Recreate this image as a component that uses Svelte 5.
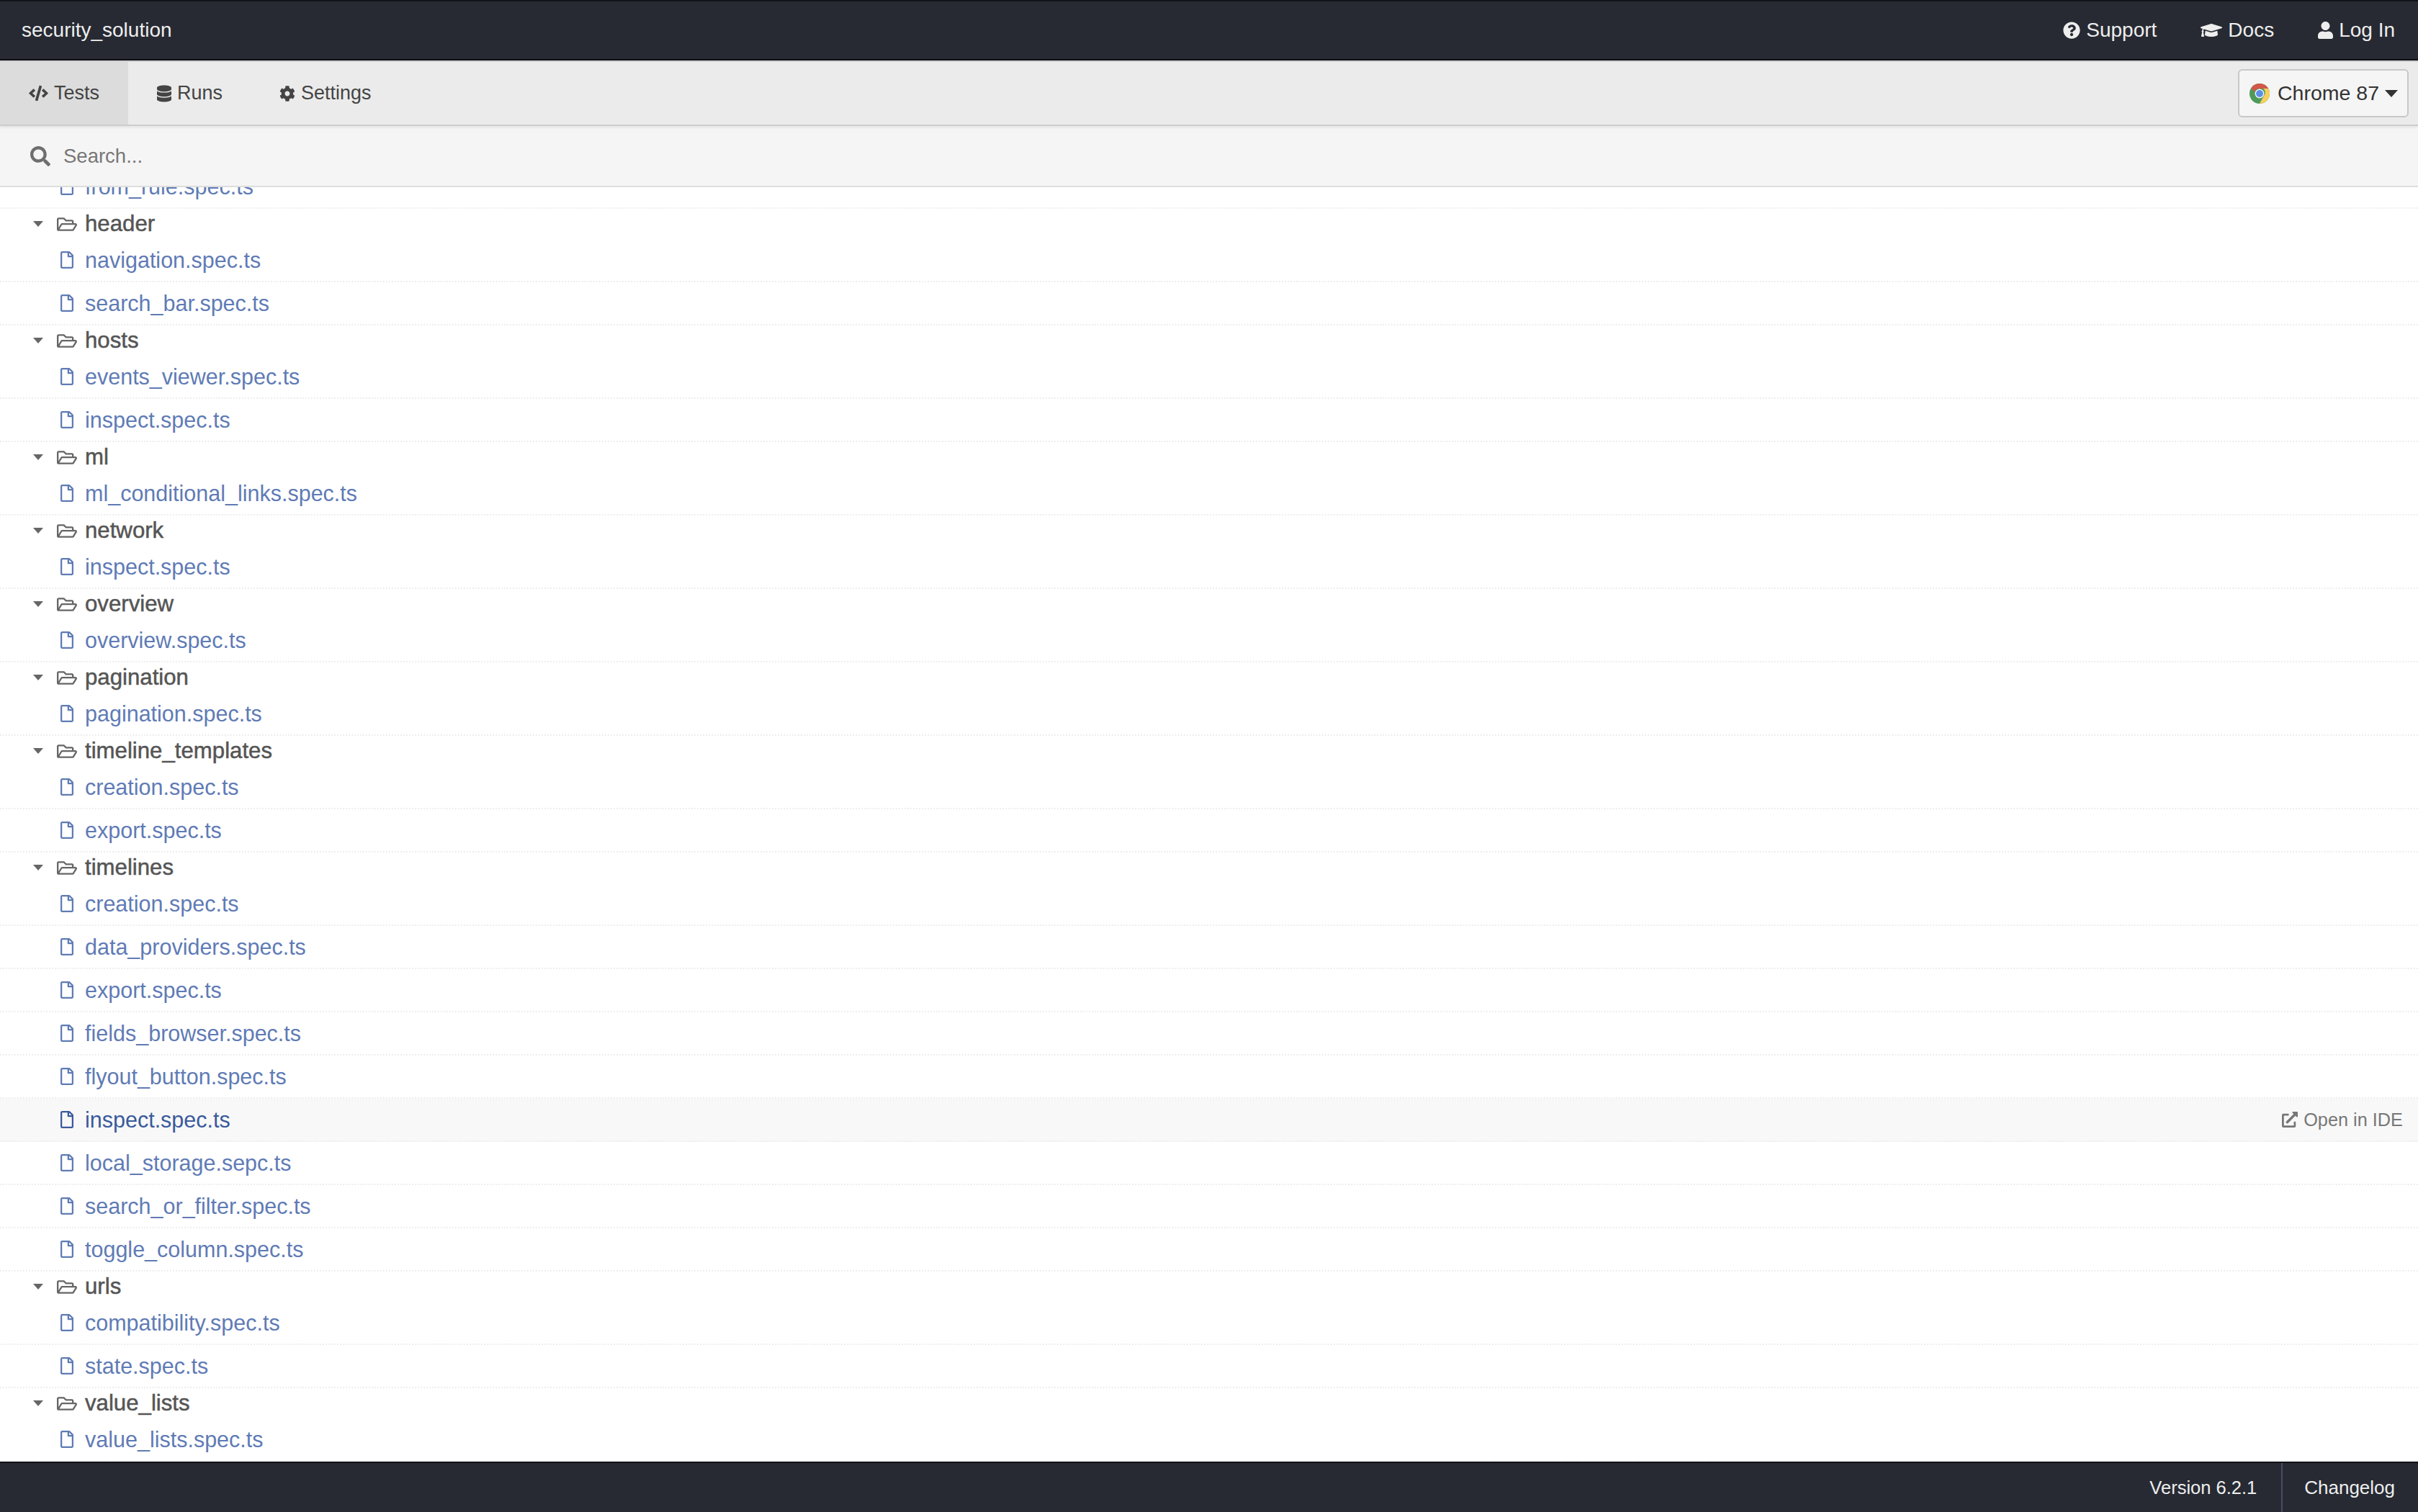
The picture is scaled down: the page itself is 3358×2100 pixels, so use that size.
<script>
	const folders = [
		{ name: 'header', specs: ['navigation.spec.ts', 'search_bar.spec.ts'] },
		{ name: 'hosts', specs: ['events_viewer.spec.ts', 'inspect.spec.ts'] },
		{ name: 'ml', specs: ['ml_conditional_links.spec.ts'] },
		{ name: 'network', specs: ['inspect.spec.ts'] },
		{ name: 'overview', specs: ['overview.spec.ts'] },
		{ name: 'pagination', specs: ['pagination.spec.ts'] },
		{ name: 'timeline_templates', specs: ['creation.spec.ts', 'export.spec.ts'] },
		{
			name: 'timelines',
			specs: [
				'creation.spec.ts',
				'data_providers.spec.ts',
				'export.spec.ts',
				'fields_browser.spec.ts',
				'flyout_button.spec.ts',
				'inspect.spec.ts',
				'local_storage.sepc.ts',
				'search_or_filter.spec.ts',
				'toggle_column.spec.ts'
			]
		},
		{ name: 'urls', specs: ['compatibility.spec.ts', 'state.spec.ts'] },
		{ name: 'value_lists', specs: ['value_lists.spec.ts'] }
	];
	const fileIcon =
		'M369.9 97.9L286 14C277 5 264.8-.1 252.1-.1H48C21.5 0 0 21.5 0 48v416c0 26.5 21.5 48 48 48h288c26.5 0 48-21.5 48-48V131.9c0-12.7-5.1-25-14.1-34zM332.1 128H256V51.9l76.1 76.1zM48 464V48h160v104c0 13.3 10.7 24 24 24h104v288H48z';
	const folderIcon =
		'M527.9 224H480v-48c0-26.5-21.5-48-48-48H272l-64-64H48C21.5 64 0 85.5 0 112v288c0 26.5 21.5 48 48 48h400c16.5 0 31.9-8.5 40.7-22.6l79.9-128c20-31.9-3-73.4-40.7-73.4zM48 118c0-3.3 2.7-6 6-6h134.1l64 64H426c3.3 0 6 2.7 6 6v42H152c-16.8 0-32.4 8.8-41.1 23.2L48 351.4zm400 282H72l77.2-128H528z';
</script>

{#snippet specRow(spec, hovered)}
	<div class="row spec" class:hovered>
		<svg class="file-icon" viewBox="0 0 384 512"><path d={fileIcon} /></svg>
		<span class="spec-name">{spec}</span>
		{#if hovered}
			<span class="open-ide">
				<svg viewBox="0 0 512 512"><path d="M432,320H400a16,16,0,0,0-16,16V448H64V128H208a16,16,0,0,0,16-16V80a16,16,0,0,0-16-16H48A48,48,0,0,0,0,112V464a48,48,0,0,0,48,48H400a48,48,0,0,0,48-48V336A16,16,0,0,0,432,320ZM488,0h-128c-21.37,0-32.05,25.91-17,41l35.73,35.73L135,320.37a24,24,0,0,0,0,34L157.67,377a24,24,0,0,0,34,0L435.28,133.32,471,169c15,15,41,4.5,41-17V24A24,24,0,0,0,488,0Z" /></svg>
				Open in IDE
			</span>
		{/if}
	</div>
{/snippet}

<div class="app">
	<header class="topbar">
		<span class="project">security_solution</span>
		<nav class="top-links">
			<a>
				<svg viewBox="0 0 512 512"><path d="M504 256c0 136.997-111.043 248-248 248S8 392.997 8 256C8 119.083 119.043 8 256 8s248 111.083 248 248zM262.655 90c-54.497 0-89.255 22.957-116.549 63.758-3.536 5.286-2.353 12.415 2.715 16.258l34.699 26.31c5.205 3.947 12.621 3.008 16.665-2.122 17.864-22.658 30.113-35.797 57.303-35.797 20.429 0 45.698 13.148 45.698 32.958 0 14.976-12.363 22.667-32.534 33.976C247.128 238.528 216 254.941 216 296v4c0 6.627 5.373 12 12 12h56c6.627 0 12-5.373 12-12v-1.333c0-28.462 83.186-29.647 83.186-106.667 0-58.002-60.165-102-116.531-102zM256 338c-25.365 0-46 20.635-46 46 0 25.364 20.635 46 46 46s46-20.636 46-46c0-25.365-20.635-46-46-46z" /></svg>
				Support
			</a>
			<a>
				<svg class="cap" viewBox="0 0 640 512"><path d="M622.34 153.2L343.4 67.5c-15.2-4.67-31.6-4.67-46.79 0L17.66 153.2c-23.54 7.23-23.54 38.36 0 45.59l48.63 14.94c-10.67 13.19-17.23 29.28-17.88 46.9C38.78 266.15 32 276.11 32 288c0 10.78 5.68 19.85 13.86 25.65L20.33 428.53C18.11 438.52 25.71 448 35.94 448h56.11c10.24 0 17.84-9.48 15.62-19.47L82.14 313.65C90.32 307.85 96 298.78 96 288c0-11.57-6.47-21.25-15.66-26.87.76-15.02 8.44-28.3 20.69-36.72L296.6 284.5c9.06 2.78 26.44 6.25 46.79 0l278.95-85.7c23.55-7.24 23.55-38.36 0-45.6zM352.79 315.09c-28.53 8.76-52.84 3.92-65.59 0l-145.02-44.55L128 384c0 35.35 85.96 64 192 64s192-28.65 192-64l-14.18-113.47-145.03 44.56z" /></svg>
				Docs
			</a>
			<a>
				<svg class="user" viewBox="0 0 448 512"><path d="M224 256c70.7 0 128-57.3 128-128S294.7 0 224 0 96 57.3 96 128s57.3 128 128 128zm89.6 32h-16.7c-22.2 10.2-46.9 16-72.9 16s-50.6-5.8-72.9-16h-16.7C60.2 288 0 348.2 0 422.4V464c0 26.5 21.5 48 48 48h352c26.5 0 48-21.5 48-48v-41.6c0-74.2-60.2-134.4-134.4-134.4z" /></svg>
				Log In
			</a>
		</nav>
	</header>

	<div class="toolbar">
		<div class="tabs">
			<a class="tab active">
				<svg class="code" viewBox="0 0 640 512"><path d="M278.9 511.5l-61-17.7c-6.4-1.8-10-8.5-8.2-14.9L346.2 8.7c1.8-6.4 8.5-10 14.9-8.2l61 17.7c6.4 1.8 10 8.5 8.2 14.9L293.8 503.3c-1.9 6.4-8.5 10.1-14.9 8.2zm-114-112.2l43.5-46.4c4.6-4.9 4.3-12.7-.8-17.2L117 256l90.6-79.7c5.1-4.5 5.5-12.3.8-17.2l-43.5-46.4c-4.5-4.8-12.1-5.1-17-.5L3.8 247.2c-5.1 4.7-5.1 12.8 0 17.5l144.1 135.1c4.9 4.6 12.5 4.4 17-.5zm327.2.6l144.1-135.1c5.1-4.7 5.1-12.8 0-17.5L492.1 112.1c-4.8-4.5-12.4-4.3-17 .5L431.6 159c-4.6 4.9-4.3 12.7.8 17.2L523 256l-90.6 79.7c-5.1 4.5-5.5 12.3-.8 17.2l43.5 46.4c4.5 4.9 12.1 5.1 17 .6z" /></svg>
				Tests
			</a>
			<a class="tab runs">
				<svg class="db" viewBox="0 0 448 512"><path d="M448 73.143v45.714C448 159.143 347.667 192 224 192S0 159.143 0 118.857V73.143C0 32.857 100.333 0 224 0s224 32.857 224 73.143zM448 176v102.857C448 319.143 347.667 352 224 352S0 319.143 0 278.857V176c48.125 33.143 136.208 48.572 224 48.572S399.874 209.143 448 176zm0 160v102.857C448 479.143 347.667 512 224 512S0 479.143 0 438.857V336c48.125 33.143 136.208 48.572 224 48.572S399.874 369.143 448 336z" /></svg>
				Runs
			</a>
			<a class="tab settings">
				<svg class="cog" viewBox="0 0 512 512"><path d="M487.4 315.7l-42.6-24.6c4.3-23.2 4.3-47 0-70.2l42.6-24.6c4.9-2.8 7.1-8.6 5.5-14-11.1-35.6-30-67.8-54.7-94.6-3.8-4.1-10-5.1-14.8-2.3L380.8 110c-17.9-15.4-38.5-27.3-60.8-35.1V25.8c0-5.6-3.9-10.5-9.4-11.7-36.7-8.2-74.3-7.8-109.2 0-5.5 1.2-9.4 6.1-9.4 11.7V75c-22.2 7.9-42.8 19.8-60.8 35.1L88.7 85.5c-4.9-2.8-11-1.9-14.8 2.3-24.7 26.7-43.6 58.9-54.7 94.6-1.7 5.4.6 11.2 5.5 14L67.3 221c-4.3 23.2-4.3 47 0 70.2l-42.6 24.6c-4.9 2.8-7.1 8.6-5.5 14 11.1 35.6 30 67.8 54.7 94.6 3.8 4.1 10 5.1 14.8 2.3l42.6-24.6c17.9 15.4 38.5 27.3 60.8 35.1v49.2c0 5.6 3.9 10.5 9.4 11.7 36.7 8.2 74.3 7.8 109.2 0 5.5-1.2 9.4-6.1 9.4-11.7v-49.2c22.2-7.9 42.8-19.8 60.8-35.1l42.6 24.6c4.9 2.8 11 1.9 14.8-2.3 24.7-26.7 43.6-58.9 54.7-94.6 1.5-5.5-.7-11.3-5.6-14.1zM256 336c-44.1 0-80-35.9-80-80s35.9-80 80-80 80 35.9 80 80-35.9 80-80 80z" /></svg>
				Settings
			</a>
		</div>
		<button class="browser">
			<svg class="chrome" viewBox="0 0 48 48">
				<circle cx="24" cy="24" r="24" fill="#4f9a5b" />
				<path d="M24 0a24 24 0 0 1 20.8 12H24a12 12 0 0 0-11.2 7.7L3.6 11.5A24 24 0 0 1 24 0z" fill="#d3574a" />
				<path d="M44.8 12A24 24 0 0 1 24 48l9.8-18A12 12 0 0 0 33 12z" fill="#f6cf5e" />
				<circle cx="24" cy="24" r="11" fill="#f4f4f4" />
				<circle cx="24" cy="24" r="8.5" fill="#5b8fe6" />
			</svg>
			Chrome 87
			<span class="caret browser-caret"></span>
		</button>
	</div>

	<div class="search">
		<svg viewBox="0 0 512 512"><path d="M505 442.7L405.3 343c-4.5-4.5-10.6-7-17-7H372c27.6-35.3 44-79.7 44-128C416 93.1 322.9 0 208 0S0 93.1 0 208s93.1 208 208 208c48.3 0 92.7-16.4 128-44v16.3c0 6.4 2.5 12.5 7 17l99.7 99.7c9.4 9.4 24.6 9.4 33.9 0l28.3-28.3c9.4-9.4 9.4-24.6.1-34zM208 336c-70.7 0-128-57.2-128-128 0-70.7 57.2-128 128-128 70.7 0 128 57.2 128 128 0 70.7-57.2 128-128 128z" /></svg>
		<span>Search...</span>
	</div>

	<main class="list">
		<div class="list-inner">
			{@render specRow('from_rule.spec.ts', false)}
			{#each folders as folder}
				<div class="row folder">
					<span class="caret"></span>
					<svg class="folder-icon" viewBox="0 0 576 512"><path d={folderIcon} /></svg>
					<span class="folder-name">{folder.name}</span>
				</div>
				{#each folder.specs as spec}
					{@render specRow(spec, folder.name === 'timelines' && spec === 'inspect.spec.ts')}
				{/each}
			{/each}
		</div>
	</main>

	<footer class="footer">
		<span class="version">Version 6.2.1</span>
		<span class="changelog">Changelog</span>
	</footer>
</div>

<style>
	:global(body) {
		margin: 0;
		background: #fff;
	}

	.app {
		display: flex;
		flex-direction: column;
		height: 100vh;
		overflow: hidden;
		font-family: 'Liberation Sans', Arial, sans-serif;
		color: #555;
	}

	svg {
		display: block;
		flex-shrink: 0;
		fill: currentColor;
	}

	.topbar {
		display: flex;
		align-items: center;
		justify-content: space-between;
		flex-shrink: 0;
		box-sizing: border-box;
		height: 84px;
		padding: 0 32px 0 30px;
		background: #272a33;
		border-top: 2px solid #121318;
		border-bottom: 2px solid #0f1014;
		color: #eee;
		font-size: 28px;
	}

	.top-links {
		display: flex;
		align-items: center;
		gap: 61px;
	}

	.top-links a {
		display: flex;
		align-items: center;
		gap: 8px;
	}

	.top-links svg {
		width: 24px;
		height: 24px;
	}

	.top-links svg.cap {
		width: 30px;
	}

	.top-links svg.user {
		width: 21px;
	}

	.toolbar {
		display: flex;
		align-items: stretch;
		justify-content: space-between;
		flex-shrink: 0;
		box-sizing: border-box;
		height: 91px;
		background: #ebebeb;
		border-top: 2px solid #d0d0d0;
		border-bottom: 2px solid #cdcdcd;
		box-shadow: 0 2px 4px rgba(0, 0, 0, 0.08);
		position: relative;
		font-size: 27px;
		color: #444;
	}

	.tabs {
		display: flex;
	}

	.tab {
		display: flex;
		align-items: center;
		gap: 8px;
	}

	.tab.active {
		width: 178px;
		box-sizing: border-box;
		padding-left: 40px;
		background: #dcdcdc;
	}

	.tab.runs {
		padding-left: 40px;
	}

	.tab.settings {
		padding-left: 79px;
	}

	.tab .code {
		width: 27px;
		height: 23px;
	}

	.tab .db {
		width: 20px;
		height: 24px;
	}

	.tab .cog {
		width: 22px;
		height: 24px;
	}

	.browser {
		display: flex;
		align-items: center;
		align-self: center;
		box-sizing: border-box;
		width: 237px;
		height: 67px;
		margin-right: 13px;
		padding: 0 0 0 14px;
		background: #f5f5f5;
		border: 2px solid #c8c8c8;
		border-radius: 6px;
		font: inherit;
		font-size: 28.5px;
		color: #333;
	}

	.chrome {
		width: 28px;
		height: 28px;
		margin-right: 11px;
	}

	.caret {
		display: block;
		flex-shrink: 0;
		width: 0;
		height: 0;
		border-left: 7px solid transparent;
		border-right: 7px solid transparent;
		border-top: 8px solid #666;
	}

	.browser-caret {
		margin-left: 8px;
		border-left-width: 9px;
		border-right-width: 9px;
		border-top: 10px solid #333;
	}

	.search {
		display: flex;
		align-items: center;
		flex-shrink: 0;
		box-sizing: border-box;
		height: 85px;
		padding-left: 42px;
		background: #f5f5f5;
		border-bottom: 2px solid #ddd;
		color: #777;
		font-size: 27.5px;
	}

	.search svg {
		width: 28px;
		height: 28px;
		margin-right: 18px;
		fill: #6e6e6e;
	}

	.list {
		flex: 1;
		min-height: 0;
		overflow: hidden;
	}

	.list-inner {
		margin-top: -30px;
	}

	.row {
		display: flex;
		align-items: center;
		box-sizing: border-box;
	}

	.spec {
		height: 60px;
		padding-left: 84px;
		border-bottom: 2px dotted #eee;
		color: #5f7bb5;
		font-size: 30.5px;
	}

	.spec.hovered {
		background: #f8f8f8;
		color: #3a5a9c;
	}

	.file-icon {
		width: 18px;
		height: 24px;
	}

	.spec-name {
		margin-left: 16px;
	}

	.open-ide {
		display: flex;
		align-items: center;
		gap: 8px;
		margin-left: auto;
		padding-right: 21px;
		color: #777;
		font-size: 25.3px;
	}

	.open-ide svg {
		width: 22px;
		height: 22px;
	}

	.folder {
		height: 42px;
		padding-left: 46px;
		color: #555;
		font-size: 31.2px;
	}

	.folder-icon {
		width: 28px;
		height: 25px;
		margin-left: 19px;
		color: #666;
	}

	.folder-name {
		margin-left: 11px;
		-webkit-text-stroke: 0.5px #555;
	}

	.footer {
		display: flex;
		align-items: stretch;
		justify-content: flex-end;
		flex-shrink: 0;
		box-sizing: border-box;
		height: 70px;
		background: #272a33;
		border-top: 2px solid #111216;
		color: #eee;
		font-size: 26px;
	}

	.version {
		display: flex;
		align-items: center;
		padding-right: 34px;
		font-size: 25.5px;
	}

	.changelog {
		display: flex;
		align-items: center;
		padding: 0 32px 0 30px;
		border-left: 2px solid #4a4d63;
	}
</style>
